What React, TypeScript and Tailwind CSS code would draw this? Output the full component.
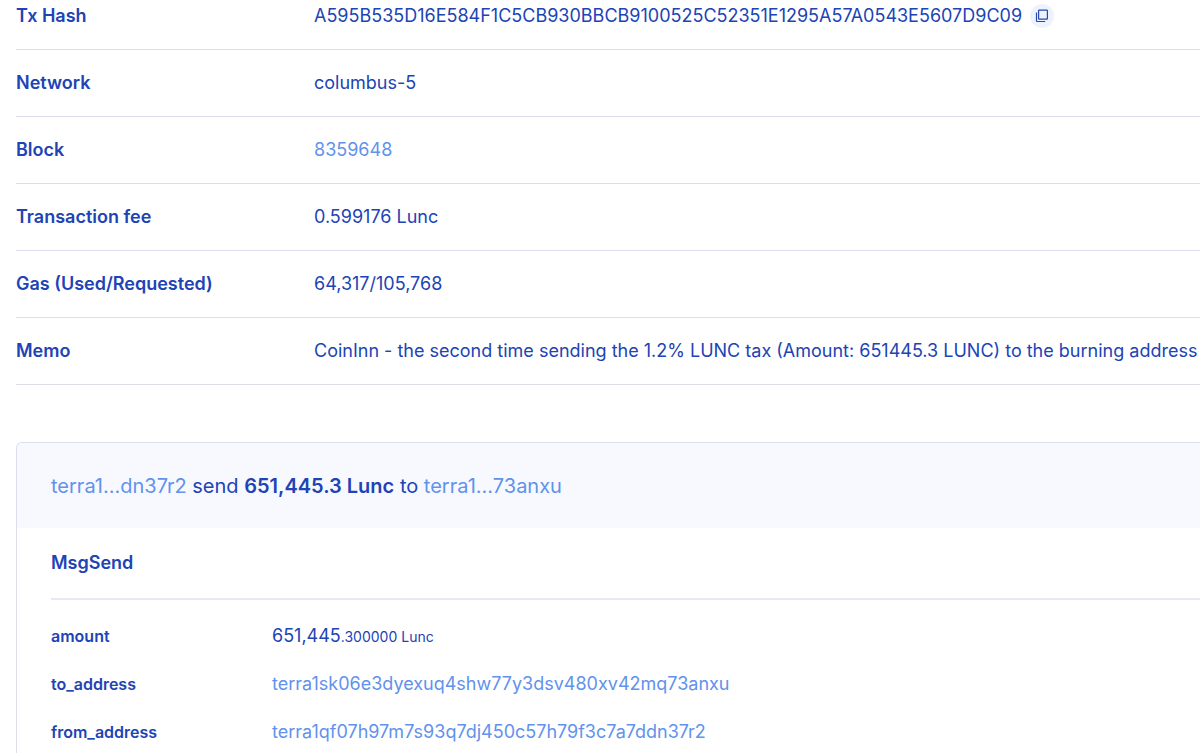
import type { ReactNode } from "react";

const HASH = "A595B535D16E584F1C5CB930BBCB9100525C52351E1295A57A0543E5607D9C09";

function Link({ children }: { children: ReactNode }) {
  return <a href="#" className="text-[#6192ec] hover:underline">{children}</a>;
}

function CopyButton() {
  return (
    <button type="button" aria-label="Copy" className="ml-2 inline-flex size-6 items-center justify-center rounded-full bg-[#edf3fe]">
      <svg width="14" height="14" viewBox="0 0 14 14" fill="none" stroke="#2a47ac" strokeWidth="1.2">
        <rect x="3.6" y="1.2" width="8.8" height="9" rx="0.5" />
        <path d="M1.5 3.6v8.2c0 .4.3.7.7.7h8" />
      </svg>
    </button>
  );
}

const details = [
  { label: "Tx Hash", value: <span className="flex items-center">{HASH}<CopyButton /></span> },
  { label: "Network", value: "columbus-5" },
  { label: "Block", value: <Link>8359648</Link> },
  { label: "Transaction fee", value: "0.599176 Lunc" },
  { label: "Gas (Used/Requested)", value: "64,317/105,768" },
  { label: "Memo", value: "CoinInn - the second time sending the 1.2% LUNC tax (Amount: 651445.3 LUNC) to the burning address" },
];

const message = [
  { label: "amount", value: <>651,445<span className="text-sm">.300000 Lunc</span></> },
  { label: "to_address", value: <Link>terra1sk06e3dyexuq4shw77y3dsv480xv42mq73anxu</Link> },
  { label: "from_address", value: <Link>terra1qf07h97m7s93q7dj450c57h79f3c7a7ddn37r2</Link> },
];

export default function App() {
  return (
    <main className="overflow-hidden bg-white pl-4 font-['Inter',sans-serif] text-[#2043b5]">
      {/* Transaction details */}
      <table className="w-full text-left text-[18px] leading-[26px] whitespace-nowrap">
        <tbody>
          {details.map((row) => (
            <tr key={row.label} className="group border-b border-[#dcdeeb]">
              <th scope="row" className="w-[298px] min-w-[298px] p-0 py-5 font-semibold group-first:pt-[3px]">{row.label}</th>
              <td className="p-0 py-5 group-first:pt-[3px]">{row.value}</td>
            </tr>
          ))}
        </tbody>
      </table>

      {/* Message card */}
      <section className="mt-[57px] rounded-tl-md border-t border-l border-[#dcdeeb]">
        <header className="rounded-tl-md bg-[#f8f9fe] px-[34px] pt-[29px] pb-7 text-xl leading-7">
          <Link>terra1...dn37r2</Link> send <strong className="font-semibold">651,445.3 Lunc</strong> to <Link>terra1...73anxu</Link>
        </header>
        <div className="pl-[34px]">
          <h2 className="border-b-2 border-[#e7e8f1] py-[22px] text-[18px] leading-[26px] font-semibold">MsgSend</h2>
          <table className="mt-3 w-full text-left leading-6 whitespace-nowrap">
            <tbody>
              {message.map((row) => (
                <tr key={row.label}>
                  <th scope="row" className="w-[221px] p-0 py-3 text-base leading-6 font-semibold">{row.label}</th>
                  <td className="p-0 py-3 text-[18px] leading-6">{row.value}</td>
                </tr>
              ))}
            </tbody>
          </table>
        </div>
      </section>
    </main>
  );
}
